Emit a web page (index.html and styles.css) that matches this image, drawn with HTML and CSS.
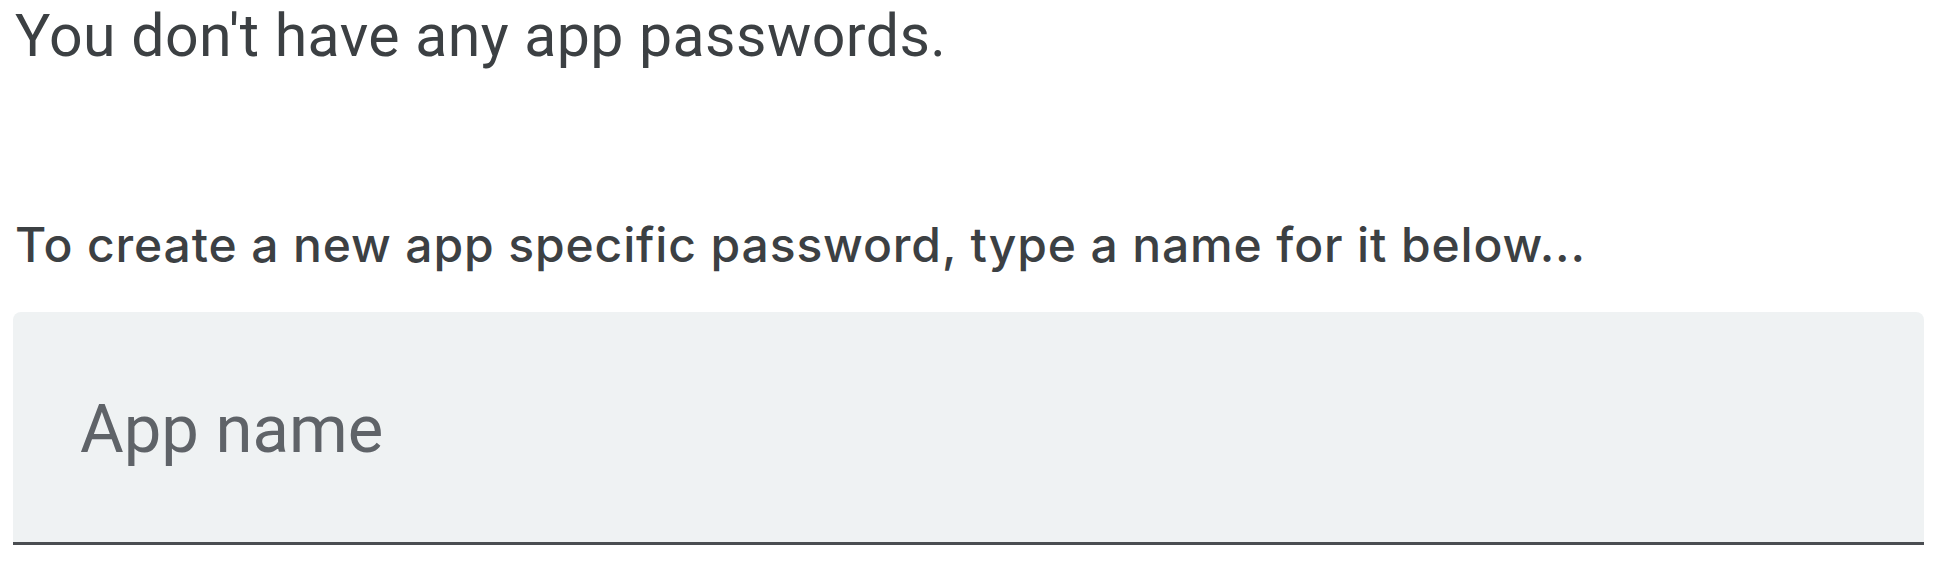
FILE: index.html
```html
<!DOCTYPE html>
<html lang="en">
<head>
<meta charset="utf-8">
<title>App passwords</title>
<link rel="stylesheet" href="styles.css">
</head>
<body>
<main class="page">
  <p class="empty">You don't have any app passwords.</p>
  <p class="hint">To create a new app specific password, type a name for it below...</p>
  <div class="field">
    <span class="field-label">App name</span>
  </div>
</main>
</body>
</html>
```
FILE: styles.css
```css
html, body {
  margin: 0;
  padding: 0;
  background: #ffffff;
}
.page {
  padding: 1px 16px 0 13px;
  display: flex;
  flex-direction: column;
}
.empty {
  margin: 0;
  font-family: Roboto, "Liberation Sans", sans-serif;
  font-size: 59px;
  line-height: 70px;
  letter-spacing: 0.45px;
  color: #3c4043;
  padding-left: 2px;
}
.hint {
  margin: 144px 0 0 0;
  font-family: Inter, Roboto, sans-serif;
  font-size: 48px;
  font-weight: 500;
  line-height: 60px;
  letter-spacing: 0.87px;
  color: #3c4043;
  padding-left: 2px;
}
.field {
  margin-top: 37px;
  background: #eff2f3;
  border-radius: 8px 8px 0 0;
  border-bottom: 3px solid #4a4d51;
  padding: 77px 0 73px 67px;
}
.field-label {
  display: block;
  font-family: Roboto, "Liberation Sans", sans-serif;
  font-size: 67px;
  line-height: 80px;
  color: #5f6368;
}
```
